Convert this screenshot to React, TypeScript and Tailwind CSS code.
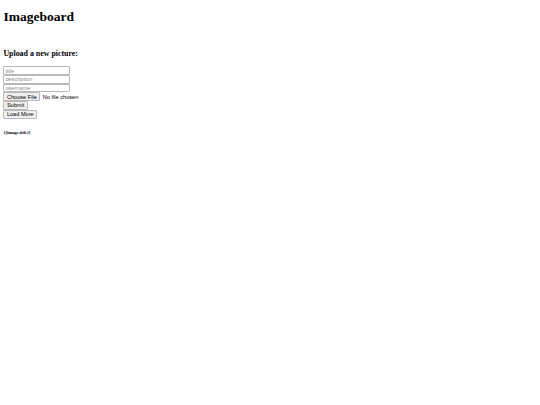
const inputCls =
  "box-border block h-[8.7px] w-[66.5px] rounded-[1px] border border-[#b8b8b8] bg-white px-[1px] text-[5.6px] leading-[6px] outline-none placeholder:text-[#8a8a8a]";

const buttonCls =
  "box-border block rounded-[1px] border border-[#b8b8b8] bg-[#efefef] px-[2.5px] text-[5.6px] leading-[6px] text-black";

const App = () => {
  return (
    <div
      className="min-h-[405px] bg-white px-[3.4px] text-black"
      style={{ fontFamily: '"Liberation Serif", serif' }}
    >
      <h1 className="my-[9px] pt-0 text-[13.5px] font-bold leading-[15.5px]">Imageboard</h1>
      <div className="h-[7.6px]" />
      <h3 className="my-[7.9px] text-[7.9px] font-bold leading-[9.1px]">Upload a new picture:</h3>
      <form className="flex flex-col items-start pt-[0.4px] font-['Liberation_Sans',sans-serif]">
        <input placeholder="title" className={inputCls} />
        <input placeholder="description" className={inputCls} />
        <input placeholder="username" className={inputCls} />
        <div className="flex h-[8.2px] items-center gap-[2.6px]">
          <button type="button" className={`${buttonCls} h-[8.2px]`}>
            Choose File
          </button>
          <span className="text-[5.6px] leading-[6px]">No file chosen</span>
        </div>
        <button type="button" className={`${buttonCls} mt-[0.3px] h-[8.7px]`}>
          Submit
        </button>
      </form>
      <button
        type="button"
        className={`${buttonCls} mt-[0.3px] h-[9.2px] font-['Liberation_Sans',sans-serif]`}
      >
        Load More
      </button>
      <h6 className="my-[10.5px] text-[4.5px] font-bold leading-[5.2px]">{"{{image.title}}"}</h6>
    </div>
  );
};

export default App;
